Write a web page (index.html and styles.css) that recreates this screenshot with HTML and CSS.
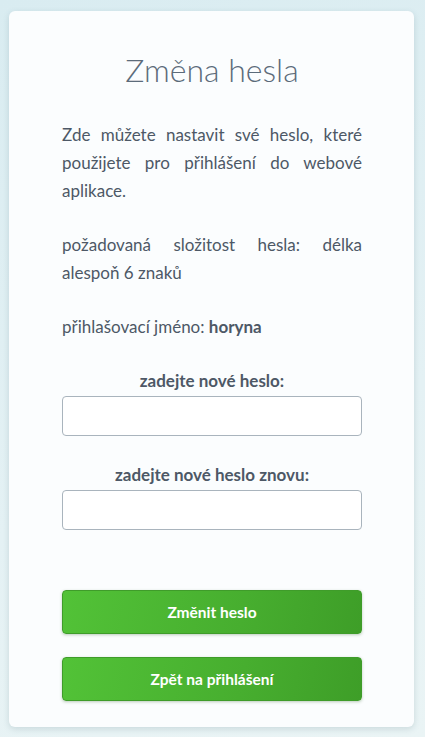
FILE: index.html
```html
<!DOCTYPE html>
<html lang="cs">
  <head>
    <meta charset="UTF-8" />
    <meta name="viewport" content="width=device-width, initial-scale=1.0" />
    <title>Změna hesla</title>
    <link rel="stylesheet" href="styles.css">
  </head>
  <body>
    <div class="card">
      <h1>Změna hesla</h1>

      <p class="info">Zde můžete nastavit své heslo, které použijete pro přihlášení do webové aplikace.</p>
      <p class="info">požadovaná složitost hesla: délka alespoň 6 znaků</p>
      <p class="info">přihlašovací jméno: <b>horyna</b></p>

      <form class="form" onsubmit="return false;">
        <div class="form-group">
          <label for="pass1">zadejte nové heslo:</label>
          <input type="password" id="pass1" />
        </div>
        <div class="form-group">
          <label for="pass2">zadejte nové heslo znovu:</label>
          <input type="password" id="pass2" />
        </div>

        <div class="buttons">
          <button type="submit" class="btn">Změnit heslo</button>
          <button type="button" class="btn">Zpět na přihlášení</button>
        </div>
      </form>
    </div>
  </body>
</html>
```

FILE: styles.css
```css
body {
  font-family: "Lato", "Open Sans", sans-serif;
  margin: 0;
  padding: 11px 11px 11px 9px;
  min-height: 100vh;
  box-sizing: border-box;
  background: linear-gradient(160deg, #d9ecf1 0%, #e4f1f4 60%, #eaf4f5 100%);
  color: #4d5866;
}
.card {
  background-color: #fbfdfe;
  border-radius: 6px;
  box-shadow: 0 2px 6px rgba(60, 100, 110, 0.18);
  padding: 14px 52px 26px 53px;
}
h1 {
  font-size: 32px;
  font-weight: 300;
  color: #5c6b7a;
  text-align: center;
  margin: 25px 0 31px;
  line-height: 40px;
}
.info {
  font-size: 17px;
  line-height: 28px;
  text-align: justify;
  margin: 0 0 26px;
}
.form {
  margin-top: 29px;
}
.form-group {
  margin-bottom: 28px;
}
label {
  display: block;
  text-align: center;
  font-size: 17px;
  font-weight: bold;
  line-height: 22px;
  margin-bottom: 4px;
}
input {
  display: block;
  width: 100%;
  height: 40px;
  box-sizing: border-box;
  border: 1px solid #a9b4bd;
  border-radius: 4px;
  background: #fff;
  font-size: 15px;
  padding: 6px 10px;
}
.buttons {
  display: flex;
  flex-direction: column;
  gap: 23px;
  margin-top: 60px;
}
.btn {
  height: 44px;
  width: 100%;
  border: 1px solid #3f9c2a;
  border-radius: 4px;
  background: linear-gradient(100deg, #52c237 0%, #47ae2f 60%, #3e9e28 100%);
  box-shadow: 0 1px 3px rgba(40, 90, 30, 0.3);
  color: #fff;
  font-family: inherit;
  font-size: 15.5px;
  font-weight: bold;
  cursor: pointer;
}
```
